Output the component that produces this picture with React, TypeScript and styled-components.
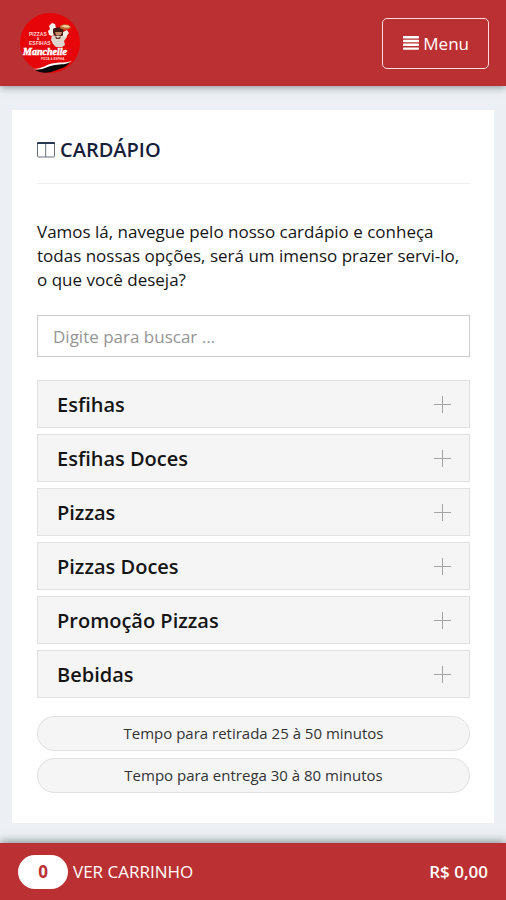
import React from "react";
import styled, { createGlobalStyle } from "styled-components";

const RED = "#bb3032";

const GlobalStyle = createGlobalStyle`
  * { box-sizing: border-box; }
  body {
    margin: 0;
    background: #ecf0f4;
    color: #151515;
    font-family: "Open Sans", sans-serif;
    font-size: 17px;
  }
  button, input { font: inherit; color: inherit; }
`;

const Page = styled.div`
  min-height: 100vh;
  display: flex;
  flex-direction: column;
`;

const Header = styled.header`
  position: sticky;
  top: 0;
  z-index: 1;
  display: flex;
  align-items: center;
  justify-content: space-between;
  padding: 12px 17px 12px 19px;
  background: ${RED};
  box-shadow: 0 1px 8px rgba(40, 60, 65, 0.55);
`;

const LogoLink = styled.a`
  display: block;
  height: 62px;
`;

const MenuButton = styled.button`
  display: flex;
  align-items: center;
  gap: 4px;
  height: 51px;
  padding: 0 19px 0 20px;
  background: transparent;
  border: 1px solid #ffdcdc;
  border-radius: 5px;
  color: #fff;
  font-weight: 500;
  cursor: pointer;
`;

const Main = styled.main`
  flex: 1;
  padding: 24px 12px 20px;
`;

const Card = styled.section`
  padding: 25px 24px 30px 25px;
  background: #fff;
`;

const Title = styled.h1`
  display: flex;
  align-items: center;
  gap: 5px;
  margin: 0 0 36px;
  padding-bottom: 18px;
  border-bottom: 1px solid #eee;
  color: #17203a;
  font-size: 20px;
  font-weight: 600;
  line-height: 30px;
`;

const Intro = styled.p`
  margin: 0 0 23px;
  font-size: 17px;
  line-height: 24px;
`;

const Search = styled.input`
  display: block;
  width: 100%;
  height: 42px;
  margin-bottom: 23px;
  padding: 0 15px;
  background: #fff;
  border: 1px solid #ccc;
  border-radius: 0;
  &::placeholder { color: #959595; opacity: 1; }
`;

const Categories = styled.div`
  display: grid;
  gap: 6px;
  margin-bottom: 18px;
`;

const Category = styled.button`
  display: flex;
  align-items: center;
  justify-content: space-between;
  height: 48px;
  padding: 0 18px 0 19px;
  background: #f5f5f5;
  border: 1px solid #e0e0e0;
  font-size: 20px;
  font-weight: 600;
  cursor: pointer;
`;

const Times = styled.div`
  display: grid;
  gap: 7px;
`;

const TimePill = styled.div`
  height: 35px;
  background: #f5f5f5;
  border: 1px solid #e0e0e0;
  border-radius: 18px;
  color: #333;
  font-size: 15px;
  line-height: 33px;
  text-align: center;
`;

const CartBar = styled.footer`
  position: sticky;
  bottom: 0;
  display: flex;
  align-items: center;
  justify-content: space-between;
  height: 57px;
  padding: 0 18px;
  background: ${RED};
  box-shadow: 0 -1px 9px rgba(40, 60, 65, 0.6);
  color: #fff;
`;

const CartButton = styled.button`
  display: flex;
  align-items: center;
  gap: 5px;
  padding: 0;
  background: none;
  border: 0;
  color: #fff;
  font-weight: 500;
  cursor: pointer;
`;

const Count = styled.span`
  width: 50px;
  height: 34px;
  border-radius: 17px;
  background: #fff;
  color: ${RED};
  font-weight: 700;
  line-height: 34px;
  text-align: center;
`;

const Total = styled.span`
  font-weight: 600;
`;

const Logo = () => (
  <svg width="62" height="62" viewBox="0 0 62 62" role="img" aria-label="Pizzas e Esfihas Manchelle">
    <circle cx="31" cy="31" r="30" fill="#e60508" />
    <path d="M30 14l3-3 3 1 1 4-2 2 1 3-3 3-3-1-1-4 2-2z" fill="#f6f2ec" />
    <path d="M34 17c2-2 8-2 10 0l1 4-2 3h-7l-2-3z" fill="#3f1c16" />
    <path d="M36 20h7l-1 3c-2 1-4 1-5 0z" fill="#c98a68" />
    <path d="M33 23l4 1h6l3-3 2 4-3 4 1 4-3 2h-6l-3-3-2-4z" fill="#ded6cd" />
    <path d="M36 24l3 2 3-2-1 3h-4z" fill="#70382e" />
    <path d="M44 20l4-2 2 3-3 4-3-1z" fill="#f4eee6" />
    <path d="M41 14c4-3 9-2 11 1-1 3-7 4-11 1z" fill="#b76a30" />
    <path d="M42 14c4-2 8-1 9 1-3 1-6 1-9-1z" fill="#f3cf9a" />
    <g fontFamily="Liberation Sans, sans-serif" fontWeight="700">
      <text x="10" y="24" fontSize="5" fill="#ffd5d0">PIZZAS</text>
      <text x="18" y="28" fontSize="3" fill="#fff">&amp;</text>
      <text x="10" y="33" fontSize="5" fill="#ffd5d0">ESFIHAS</text>
      <text x="4" y="43" fontSize="10" fontFamily="Liberation Serif, serif" fontStyle="italic" fill="#fff" stroke="#fff" strokeWidth=".5">Manchelle</text>
      <text x="22" y="48" fontSize="3" fill="#ffd5d0">PIZZA &amp; ESFIHA</text>
    </g>
    <path d="M16 58c9-1 12-6 21-6 5 0 9 0 14-2-3 5-8 6-13 8-7 3-15 4-22 0z" fill="#080808" />
    <path d="M14 57c10 0 13-5 22-6 6-1 11 0 17-2-6 4-11 3-17 4-8 1-12 6-22 4z" fill="#fff" />
  </svg>
);

const Bars = () => (
  <svg width="16" height="14" viewBox="0 0 16 14" fill="#fff" aria-hidden="true">
    <rect y="0" width="16" height="2.4" rx=".7" />
    <rect y="3.8" width="16" height="2.4" rx=".7" />
    <rect y="7.6" width="16" height="2.4" rx=".7" />
    <rect y="11.4" width="16" height="2.4" rx=".7" />
  </svg>
);

const Columns = () => (
  <svg width="18" height="18" viewBox="0 0 18 18" fill="none" aria-hidden="true">
    <path d="M.5 2v13q0 1 1 1h15q1 0 1-1V2M8.7 2v14" stroke="#66707c" />
    <path d="M0 2q0-1 1-1h16q1 0 1 1v1H0z" fill="#283850" />
  </svg>
);

const Plus = () => (
  <svg width="17" height="17" viewBox="0 0 17 17" fill="none" stroke="#a5a5a5" aria-hidden="true">
    <path d="M8.5 0v17M0 8.5h17" />
  </svg>
);

const categories = ["Esfihas", "Esfihas Doces", "Pizzas", "Pizzas Doces", "Promoção Pizzas", "Bebidas"];
const times = ["Tempo para retirada 25 à 50 minutos", "Tempo para entrega 30 à 80 minutos"];

export default function App() {
  return (
    <Page>
      <GlobalStyle />
      <Header>
        <LogoLink href="#" aria-label="Início"><Logo /></LogoLink>
        <MenuButton type="button"><Bars />Menu</MenuButton>
      </Header>
      <Main>
        <Card>
          <Title><Columns />CARDÁPIO</Title>
          <Intro>
            Vamos lá, navegue pelo nosso cardápio e conheça todas nossas opções, será um imenso prazer servi-lo, o que você deseja?
          </Intro>
          <Search type="text" placeholder="Digite para buscar ..." aria-label="Digite para buscar" />
          <Categories>
            {categories.map((name) => (
              <Category key={name} type="button" aria-expanded={false}>{name}<Plus /></Category>
            ))}
          </Categories>
          <Times>
            {times.map((text) => <TimePill key={text}>{text}</TimePill>)}
          </Times>
        </Card>
      </Main>
      <CartBar>
        <CartButton type="button"><Count>0</Count>VER CARRINHO</CartButton>
        <Total>R$ 0,00</Total>
      </CartBar>
    </Page>
  );
}
